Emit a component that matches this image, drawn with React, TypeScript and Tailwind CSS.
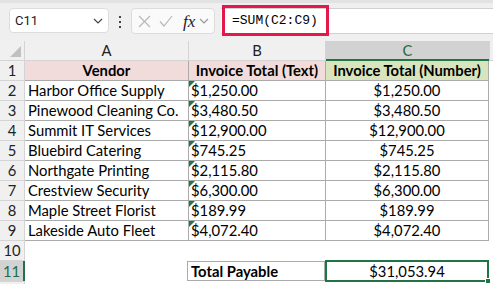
import React from 'react';

const rows = [
  { vendor: 'Harbor Office Supply', amt: '$1,250.00' },
  { vendor: 'Pinewood Cleaning Co.', amt: '$3,480.50' },
  { vendor: 'Summit IT Services', amt: '$12,900.00' },
  { vendor: 'Bluebird Catering', amt: '$745.25' },
  { vendor: 'Northgate Printing', amt: '$2,115.80' },
  { vendor: 'Crestview Security', amt: '$6,300.00' },
  { vendor: 'Maple Street Florist', amt: '$189.99' },
  { vendor: 'Lakeside Auto Fleet', amt: '$4,072.40' },
];

const cellFont = "font-['Lato','Liberation_Sans',sans-serif] text-[14.8px] leading-none";

const Chevron = ({ className }: { className?: string }) => (
  <svg width="10" height="6" viewBox="0 0 10 6" className={className}>
    <path d="M1 1l4 4 4-4" fill="none" stroke="currentColor" strokeWidth="1.2" />
  </svg>
);

const FormulaBar = () => (
  <div className="h-[41px] bg-[#efefef] border-t-[3px] border-[#e2e2e2] flex items-start">
    <div className="ml-[9px] mt-[5px] w-[100px] h-[25px] bg-white rounded-[4px] border border-[#dcdcdc] flex items-center justify-between pl-[5px] pr-[5px]">
      <span className="font-['Roboto','Noto_Sans',sans-serif] text-[13px] text-[#1a1a1a]">C11</span>
      <Chevron className="text-[#444]" />
    </div>
    <div className="w-[22px] mt-[13px] flex flex-col items-center gap-[3px]">
      <div className="w-[2px] h-[2px] bg-[#444]" />
      <div className="w-[2px] h-[2px] bg-[#444]" />
      <div className="w-[2px] h-[2px] bg-[#444]" />
    </div>
    <div className="mt-[5px] w-[84px] h-[26px] bg-[#fafafa] rounded-[4px] border border-[#dcdcdc] flex items-center pl-[6px]">
      <svg width="13" height="13" viewBox="0 0 13 13">
        <path d="M1 1l11 11M12 1L1 12" stroke="#b8b8b8" strokeWidth="1.2" />
      </svg>
      <svg width="14" height="12" viewBox="0 0 14 12" className="ml-[8px]">
        <path d="M1 6.5l4 4.5 8-10" fill="none" stroke="#b8b8b8" strokeWidth="1.2" />
      </svg>
      <span className="ml-[10px] font-['Liberation_Serif',serif] italic text-[17px] text-[#222] leading-none">fx</span>
      <Chevron className="ml-[4px] text-[#999]" />
    </div>
    <div className="relative ml-[6px] mt-[5px] flex-1 h-[26px] bg-white border-y border-[#d0d0d0]">
      <div className="absolute left-[1px] top-[-4px] w-[107px] h-[31px] border-[3px] border-[#e4184a]" />
      <span className="absolute left-[11px] top-[5px] font-['Liberation_Mono',monospace] text-[13px] text-black leading-none">=SUM(C2:C9)</span>
    </div>
  </div>
);

const ColHeader = () => (
  <div className={`flex h-[20px] ${cellFont}`}>
    <div className="relative w-[25px] bg-[#f0f0f0] border-r border-b border-[#d4d4d4]">
      <div className="absolute right-[3px] bottom-[3px] w-[11px] h-[11px] bg-[#c0c0c0] [clip-path:polygon(100%_0,100%_100%,0_100%)]" />
    </div>
    <div className="w-[164px] bg-[#f0f0f0] border-r border-b border-[#d4d4d4] flex items-center justify-center text-[#222]">A</div>
    <div className="w-[137px] bg-[#f0f0f0] border-r border-b border-[#d4d4d4] flex items-center justify-center text-[#222]">B</div>
    <div className="w-[163px] bg-[#d2d2d2] border-b-2 border-[#217346] flex items-center justify-center text-[#1e6b41]">C</div>
    <div className="flex-1 bg-[#f0f0f0] border-l border-b border-[#d4d4d4]" />
  </div>
);

const RowNum = ({ n, active }: { n?: number; active?: boolean }) => (
  <div
    className={
      active
        ? 'w-[25px] bg-[#d2d2d2] border-r-2 border-[#217346] flex items-center justify-center text-[#1e6b41]'
        : 'w-[25px] bg-[#f0f0f0] border-r border-b border-[#d4d4d4] flex items-center justify-center text-[#222]'
    }
  >
    {n}
  </div>
);

const Tri = () => (
  <div className="absolute left-0 top-0 w-[6px] h-[6px] bg-[#1d7a44] [clip-path:polygon(0_0,100%_0,0_100%)]" />
);

export default function App() {
  return (
    <div className="w-[493px] h-[284px] overflow-hidden bg-white">
      <FormulaBar />
      <ColHeader />

      <div className={`flex h-[20px] ${cellFont}`}>
        <RowNum n={1} />
        <div className="w-[164px] bg-[#f2dcdb] border-r border-b border-[#ababab] flex items-center justify-center font-bold">Vendor</div>
        <div className="w-[137px] bg-[#f2dcdb] border-r border-b border-[#ababab] flex items-center justify-center font-bold">Invoice Total (Text)</div>
        <div className="w-[163px] bg-[#d8e4bc] border-r border-b border-[#ababab] flex items-center justify-center font-bold">Invoice Total (Number)</div>
      </div>

      {rows.map((r, i) => (
        <div key={i} className={`flex h-[20px] ${cellFont}`}>
          <RowNum n={i + 2} />
          <div className="w-[164px] border-r border-b border-[#ababab] flex items-center pl-[3px]">{r.vendor}</div>
          <div className="relative w-[137px] border-r border-b border-[#ababab] flex items-center pl-[2px]">
            <Tri />
            {r.amt}
          </div>
          <div className="w-[163px] border-r border-b border-[#ababab] flex items-center justify-center">{r.amt}</div>
        </div>
      ))}

      <div className={`flex h-[20px] ${cellFont}`}>
        <RowNum n={10} />
      </div>

      <div className={`flex h-[20px] ${cellFont}`}>
        <RowNum n={11} active />
        <div className="w-[162px]" />
        <div className="w-[138px] border border-[#ababab] flex items-center pl-[3px] font-bold">Total Payable</div>
        <div className="relative w-[164px] -mt-[1px] h-[22px] border-2 border-[#217346] flex items-center justify-center">
          $31,053.94
          <div className="absolute right-[-4px] bottom-[-4px] w-[6px] h-[6px] bg-[#217346] border border-white" />
        </div>
      </div>

      <div className="flex h-[20px]">
        <div className="w-[25px] bg-[#f0f0f0] border-r border-t border-[#d4d4d4]" />
      </div>
    </div>
  );
}
